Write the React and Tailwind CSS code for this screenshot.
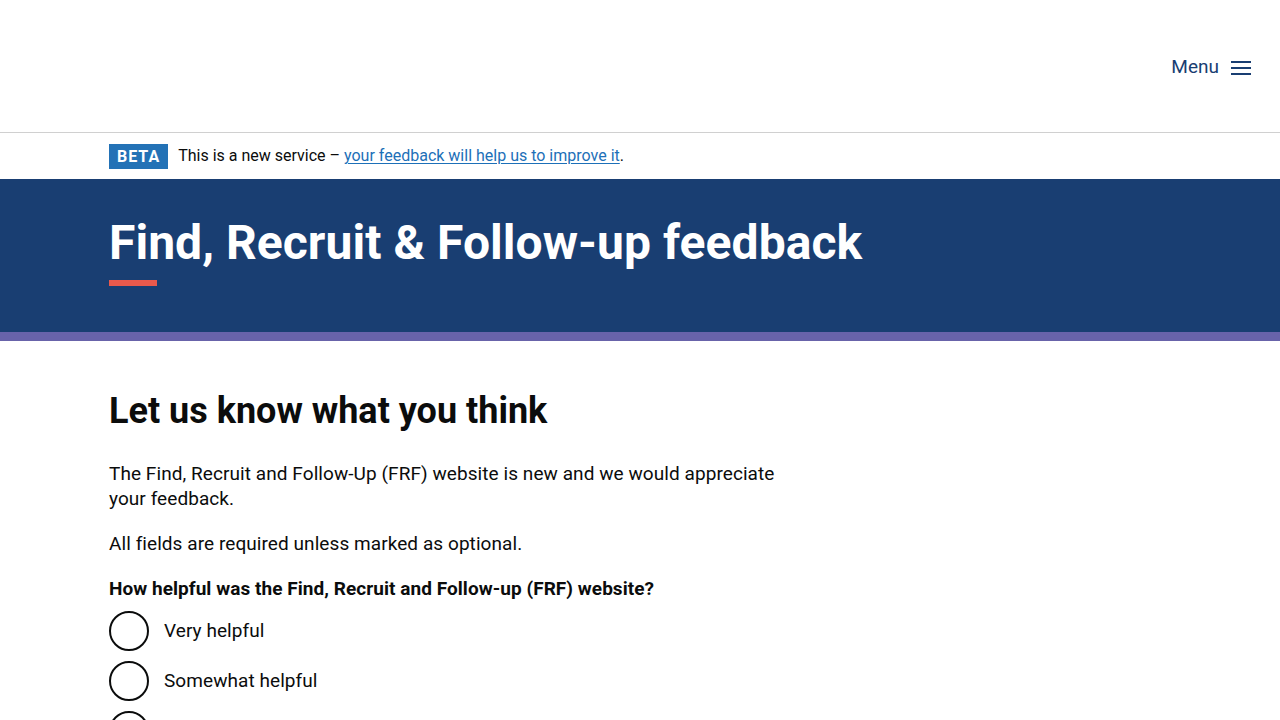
import React from 'react';

const options = ['Very helpful', 'Somewhat helpful', 'Neither helpful nor unhelpful'];

const App = () => (
  <div className="min-h-screen bg-white text-[#0b0c0c]" style={{ fontFamily: 'Roboto, "Liberation Sans", sans-serif' }}>
    <header className="h-[133px] border-b border-[#d0d0d0] flex items-center justify-end pr-[29px]">
      <button className="flex items-center gap-[12px] text-[19px] text-[#193e72] mt-[3px]">
        Menu
        <svg width="20" height="16" viewBox="0 0 20 16">
          <rect x="0" y="1" width="20" height="2" fill="#193e72" />
          <rect x="0" y="7" width="20" height="2" fill="#193e72" />
          <rect x="0" y="13" width="20" height="2" fill="#193e72" />
        </svg>
      </button>
    </header>

    <div className="h-[46px] px-[109px] flex items-center gap-[10px] text-[16px]">
      <span className="bg-[#2372b6] text-white font-bold tracking-[1px] text-[16px] leading-none px-[8px] pt-[5px] pb-[4px]">BETA</span>
      <p>
        This is a new service –{' '}
        <a href="#" className="text-[#1d70b8] underline underline-offset-2 decoration-1">your feedback will help us to improve it</a>.
      </p>
    </div>

    <section className="bg-[#193e72] border-b-[9px] border-[#6863aa] h-[162px] px-[109px] pt-[36px]">
      <h1 className="text-white font-bold text-[48px] leading-[56px] tracking-[0.05px]">Find, Recruit &amp; Follow-up feedback</h1>
      <div className="w-[48px] h-[6px] bg-[#e9594c] mt-[9px]" />
    </section>

    <main className="px-[109px] pt-[48px]">
      <div className="w-[690px]">
        <h2 className="text-[36px] font-bold leading-[44px] mb-[28px]">Let us know what you think</h2>
        <p className="text-[19px] leading-[25px] mb-[20px] tracking-[0.07px]">
          The Find, Recruit and Follow-Up (FRF) website is new and we would appreciate your feedback.
        </p>
        <p className="text-[19px] leading-[25px] mb-[20px] tracking-[0.07px]">All fields are required unless marked as optional.</p>
        <fieldset>
          <legend className="text-[19px] leading-[25px] font-bold mb-[10px] tracking-[0.05px]">
            How helpful was the Find, Recruit and Follow-up (FRF) website?
          </legend>
          <div className="flex flex-col gap-[10px]">
            {options.map((o) => (
              <label key={o} className="flex items-center gap-[15px] text-[19px] tracking-[0.07px]">
                <span className="w-[40px] h-[40px] rounded-full border-2 border-[#0b0c0c] shrink-0" />
                {o}
              </label>
            ))}
          </div>
        </fieldset>
      </div>
    </main>
  </div>
);

export default App;
